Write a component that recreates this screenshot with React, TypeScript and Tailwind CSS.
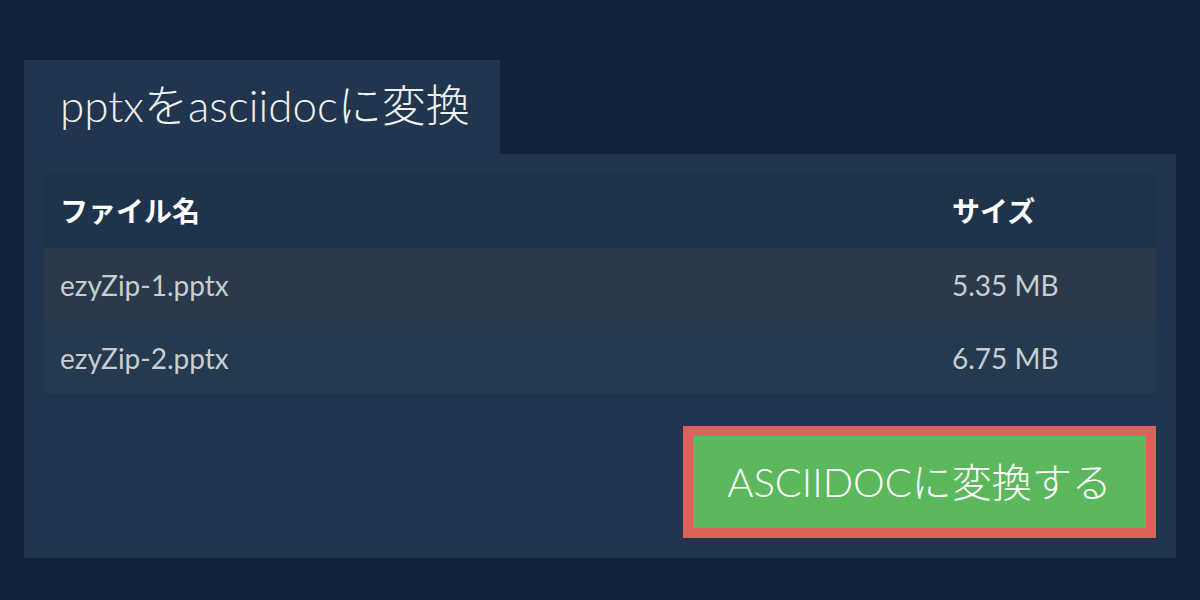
const files = [
  { name: "ezyZip-1.pptx", size: "5.35 MB", bg: "bg-[#2a3a4b]", h: "h-[74px]" },
  { name: "ezyZip-2.pptx", size: "6.75 MB", bg: "bg-[#25394f]", h: "h-[72px]" },
];

export default function App() {
  return (
    <div
      className="min-h-screen w-full bg-[#10233a] px-6 pt-[60px]"
      style={{ fontFamily: 'Lato, "Noto Sans CJK JP", sans-serif' }}
    >
      <div className="flex h-[94px] w-[476px] items-center bg-[#21364e] pb-1 pl-9">
        <h1 className="text-[44px] font-light leading-none text-[#eef1f4]">
          pptxをasciidocに変換
        </h1>
      </div>

      <div className="bg-[#21364e] px-5 pb-5 pt-[19px]">
        <div className="w-full">
          <div className="grid h-[75px] grid-cols-[892px_1fr] items-center bg-[#1f334a] text-[28px] font-bold text-white">
            <div className="pl-4">ファイル名</div>
            <div className="pl-4">サイズ</div>
          </div>
          {files.map((f) => (
            <div
              key={f.name}
              className={`grid grid-cols-[892px_1fr] items-center text-[28px] text-[#c8cdd3] ${f.bg} ${f.h}`}
            >
              <div className="pl-4">{f.name}</div>
              <div className="pl-4">{f.size}</div>
            </div>
          ))}
        </div>

        <div className="mt-8 flex justify-end">
          <button className="flex h-[112px] w-[473px] items-center justify-center border-[10px] border-[#dc605c] bg-[#5cb85c] text-[40px] font-light text-white">
            ASCIIDOCに変換する
          </button>
        </div>
      </div>
    </div>
  );
}
